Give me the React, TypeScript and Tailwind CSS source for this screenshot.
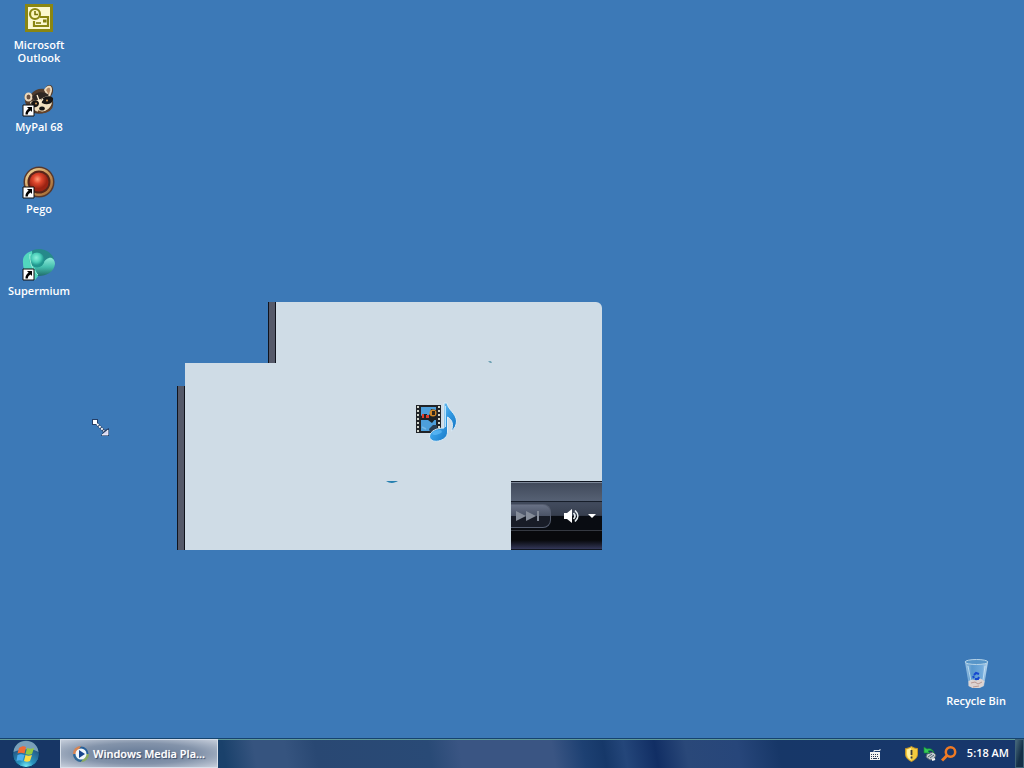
import type { ReactNode } from "react";

function ShortcutArrow() {
  return (
    <g>
      <path d="M0 20h11v11H0z" fill="#fff" stroke="#111" strokeWidth="1" />
      <path d="M4 22h5v5L7.600 25.600C6 26.500 5 27.500 4.800 29.500H2.500C2.300 27 3.500 25 5.600 23.700z" fill="#000" />
    </g>
  );
}

function OutlookIcon() {
  return (
    <svg viewBox="0 0 32 32" className="size-8" aria-hidden="true">
      <path d="M2 1h28v28H2z" fill="#8a8612" />
      <path d="M5 4h22v22H5z" fill="#fbf8cf" />
      <circle cx="12" cy="11" r="5" fill="#fdf7bf" stroke="#8a8612" strokeWidth="2.200" />
      <path d="M12 8v3.500H15" fill="none" stroke="#77730b" strokeWidth="1.600" />
      <path d="M17 14h8v9H11v-5" fill="none" stroke="#8a8612" strokeWidth="2.200" />
      <path d="M20 16.500h3.500v3H20z" fill="#817d10" />
      <path d="M13 20h5" stroke="#817d10" strokeWidth="1.600" />
    </svg>
  );
}

function RaccoonIcon() {
  return (
    <svg viewBox="0 0 32 32" className="size-8 overflow-visible" aria-hidden="true">
      <path d="M2 13C0 9 4 7 8 9c4-5 9-6 14-5 1-4 5-5 7-3 2 4 1 8-1 10 3 5 3 10 0 13-5 4-11 6-17 4-5-3-10-9-9-15z" fill="#513c2e" />
      <ellipse cx="5.500" cy="12" rx="3" ry="3.500" fill="#6b5140" stroke="#ecd9bc" strokeWidth="2" />
      <path d="M22 5c3-5 7-4 6 1l-2 6z" fill="#b08561" stroke="#ecd9bc" strokeWidth="1.800" />
      <path d="M9 12c4-6 12-6 17-2l-5 4-8 3z" fill="#2e2723" />
      <path d="M7 17c5-2 8-2 11-3 4-3 8-4 11-1 1 6-2 11-7 13-6 3-13 0-15-9z" fill="#f0dfbf" />
      <path d="M8 18c3-4 7-3 8 0 0 4-4 5-7 4zm10-3c3-4 9-5 12-2 1 5-5 8-11 5z" fill="#181615" />
      <path d="M14 10l3 8 3-4" stroke="#fff0d4" strokeWidth="1.300" fill="none" />
      <ellipse cx="19" cy="23.500" rx="2.800" ry="2" fill="#151515" />
      <path d="M15 26c5 3 11 1 14-4" fill="none" stroke="#684326" strokeWidth="1.500" />
      <circle cx="13" cy="18.500" r="1" fill="#d29858" /><circle cx="24" cy="15.500" r="1" fill="#d29858" />
      <ShortcutArrow />
    </svg>
  );
}

function PegoIcon() {
  return (
    <svg viewBox="0 0 32 32" className="size-8 overflow-visible" aria-hidden="true">
      <defs>
        <radialGradient id="pego" cx=".42" cy=".35"><stop stopColor="#ff9c78" /><stop offset=".45" stopColor="#df472d" /><stop offset="1" stopColor="#9b2313" /></radialGradient>
        <linearGradient id="ring" x1="0" y1="0" x2="1" y2="1"><stop stopColor="#f3dda0" /><stop offset=".5" stopColor="#c99558" /><stop offset="1" stopColor="#9c622d" /></linearGradient>
      </defs>
      <circle cx="16" cy="15" r="15.500" fill="#57382d" />
      <circle cx="16" cy="15" r="14" fill="url(#ring)" />
      <circle cx="16" cy="15" r="11.500" fill="#57251a" />
      <circle cx="16" cy="15" r="9.500" fill="url(#pego)" />
      <ShortcutArrow />
    </svg>
  );
}

function SupermiumIcon() {
  return (
    <svg viewBox="0 0 32 32" className="size-8 overflow-visible" aria-hidden="true">
      <defs>
        <radialGradient id="super" cx=".45" cy=".35"><stop stopColor="#8af0dc" /><stop offset=".6" stopColor="#4bceb9" /><stop offset="1" stopColor="#21968e" /></radialGradient>
        <linearGradient id="superRight" x1="0" y1="0" x2="0" y2="1"><stop stopColor="#8eebd9" /><stop offset=".5" stopColor="#45bfae" /><stop offset="1" stopColor="#206d6a" /></linearGradient>
      </defs>
      <path d="M6 4C12-3 27-1 31 10l-11 3L8 8z" fill="#26898a" />
      <path d="M0 14C-1 7 4 3 9 2l1 11c1 5 4 9 6 13l-4 5C4 28 0 22 0 14z" fill="#52d6be" />
      <path d="M11 17c7 3 9-6 15-8 3-1 6 2 6 6-1 8-8 12-17 12z" fill="url(#superRight)" />
      <circle cx="14" cy="11" r="7.500" fill="url(#super)" />
      <path d="M7 5c-1 7 2 15 8 21" stroke="#a2f2dd" fill="none" />
      <ShortcutArrow />
    </svg>
  );
}

function RecycleIcon() {
  return (
    <svg viewBox="0 0 32 32" className="size-8" aria-hidden="true">
      <defs><linearGradient id="bin"><stop stopColor="#a9cde8" /><stop offset=".3" stopColor="#5b9bd0" /><stop offset=".75" stopColor="#78b0df" /><stop offset="1" stopColor="#d2e6f5" /></linearGradient></defs>
      <path d="M5 4h23l-4 24-4 2h-7l-4-2z" fill="url(#bin)" opacity=".9" />
      <path d="M8.500 23l4-1.500 4 1 4-2 4 2.500-1 5-4 2h-7l-4-2z" fill="#dcd3d1" />
      <path d="M11 25l4-1 3 2 4-2M13 29l6-1" fill="none" stroke="#b89993" />
      <ellipse cx="16.500" cy="4" rx="11.500" ry="2.500" fill="#5795c8" stroke="#b7d4e8" />
      <path d="M14 17l2-2 3 1m0 3l-1 2h-3m-1-1l-1-2" fill="none" stroke="#1648d0" strokeWidth="2" />
      <path d="M8 8l3 15M25 8l-2 14" stroke="#e4f7ff" opacity=".6" />
    </svg>
  );
}

function DesktopIcon({ label, children, small = false }: { label: ReactNode; children: ReactNode; small?: boolean }) {
  return (
    <button className={small ? "flex w-20 flex-col items-center gap-1 text-center leading-[13px]" : "flex h-[82px] w-[78px] flex-col items-center gap-[3px] text-center leading-[13px]"}>
      {children}
      <span>{label}</span>
    </button>
  );
}

function MediaIcon() {
  return (
    <svg viewBox="0 0 42 42" className="absolute top-[100px] left-[239px] size-[42px]" aria-hidden="true">
      <defs>
        <linearGradient id="note" x1="0" y1="0" x2="1" y2="1"><stop stopColor="#a0ddff" /><stop offset=".5" stopColor="#349ce4" /><stop offset="1" stopColor="#0965b7" /></linearGradient>
      </defs>
      <path d="M0 3h25v28H0z" fill="#202327" />
      <path d="M2 4v26M23 4v26" stroke="#d3d7cd" strokeWidth="2" strokeDasharray="2 2" />
      <path d="M5 5h15v11H5zm0 13h15v11H5z" fill="#4d9fdb" />
      <path d="M5 17v-3l3-2h3v3l3-3 1-5 5 1v8l-4 5-4-3H5z" fill="#1b2226" />
      <path d="M6 12h2v4H6zm4 1h3v3h-3z" fill="#df3c29" /><circle cx="17" cy="11" r="3.500" fill="#cf8627" /><path d="M16 9h3v4h-3z" fill="#30291f" />
      <path d="M13 27l4-4h4v7h-7z" fill="#293f54" />
      <path d="M6 25l4 2" fill="none" stroke="#75b9e7" strokeWidth="1.500" />
      <path d="M28 1h3c1 7 9 10 9.500 18 0 4-2 8-5 10 2-7 1-11-4-14v15c0 5-4 8-9 9-5 1-9-1-9-5 1-5 7-8 14.500-8z" fill="url(#note)" stroke="#dcecf6" strokeWidth="1" />
      <path d="M29.500 4v21" stroke="#b7e4ff" strokeWidth="1" />
      <ellipse cx="21" cy="30.500" rx="5" ry="2" fill="#71c7ff" opacity=".5" transform="rotate(-15 21 30.500)" />
    </svg>
  );
}

function VolumeIcon() {
  return (
    <svg viewBox="0 0 16 16" className="size-4" aria-hidden="true">
      <path d="M1 5h3l5-4v14l-5-4H1z" fill="#fff" />
      <path d="M10.500 5c2 2 2 4 0 6M12 2.500c4 4 4 7 0 11" fill="none" stroke="#e6edf0" strokeWidth="1.700" />
    </svg>
  );
}

function PlayerWindow() {
  return (
    <section aria-label="Windows Media Player" className="absolute top-[302px] left-[177px] flex w-[425px] flex-col">
      <div className="ml-[91px] flex h-[61px]">
        <div className="w-2 border-x border-[#10131c] bg-[#555969]" />
        <div className="flex-1 rounded-tr-md bg-[#cfdce6]" />
      </div>
      <div className="flex h-[187px]">
        <div className="mt-[23px] w-2 border-x border-[#10131c] bg-[#555969]" />
        <div className="flex flex-1 items-end justify-end bg-[#cfdce6]">
          <div className="w-[91px] border-y border-[#111722] bg-black">
            <div className="h-[19px] border-t border-[#7d8798] bg-linear-to-b from-[#414a5b] to-[#566174]" />
            <div className="flex h-[30px] items-center border-y border-t-[#171e2a] border-b-[#353941] bg-linear-to-b from-[#40495b] from-10% via-[#363e4e] via-48% to-[#090c12] to-50%">
              <button aria-label="Next" className="flex h-6 w-10 items-center rounded-r-lg border border-l-0 border-[#565e70] bg-linear-to-b from-[#687185] from-0% via-[#4c5467] via-48% to-[#181c27] to-50%">
                <svg viewBox="0 0 25 12" className="ml-1 h-3 w-[25px]" aria-hidden="true"><path d="M1 1l10 5-10 5zm10 0l10 5-10 5zm11 0h2v10h-2z" fill="#858c99" /></svg>
              </button>
              <button aria-label="Volume" className="ml-3"><VolumeIcon /></button>
              <button aria-label="More options" className="ml-[9px]"><svg viewBox="0 0 8 5" className="h-[5px] w-2" aria-hidden="true"><path d="M0 0h8L4 4z" fill="#fff" /></svg></button>
            </div>
            <div className="h-[18px] bg-linear-to-b from-[#08090c] from-50% to-[#34385a]" />
          </div>
        </div>
      </div>
      <MediaIcon />
      <svg viewBox="0 0 12 3" className="absolute top-[178px] left-[209px] h-[3px] w-3" aria-hidden="true"><path d="M0 1h12c-3 2-8 3-12 0" fill="#267faf" /></svg>
      <svg viewBox="0 0 4 3" className="absolute top-[59px] left-[311px] h-[3px] w-1" aria-hidden="true"><path d="M0 0l3 0 1 2H2z" fill="#72a3b5" /></svg>
    </section>
  );
}

function StartIcon() {
  return (
    <svg viewBox="0 0 28 28" className="size-7" aria-hidden="true">
      <defs><radialGradient id="start" cx=".5" cy=".98" r=".7"><stop stopColor="#7df3fb" /><stop offset=".4" stopColor="#2a95be" /><stop offset="1" stopColor="#245b89" /></radialGradient></defs>
      <circle cx="14" cy="14" r="13.500" fill="url(#start)" stroke="#0b3663" />
      <path d="M1.500 12C3-3 25-3 26.500 12c-7-4-17-3-25 0z" fill="#a9c4d2" opacity=".65" />
      <path d="M7 8c3-2 5-2 7-1l-1.500 6.500c-3-1-5-1-7 0z" fill="#f06a35" />
      <path d="M15 8c3 1 4 1 7 0l-2 6c-2 1-4 1-6.500 0z" fill="#94c941" />
      <path d="M5.500 15c3-1 4-1 7 0l-2 6c-2-1-4-1-6 0z" fill="#4faff0" />
      <path d="M13.500 15c2 1 4 1 6.500 0l-2 6c-2 1-4 1-6 0z" fill="#ffdc42" />
    </svg>
  );
}

function TaskIcon() {
  return (
    <svg viewBox="0 0 16 16" className="size-4 shrink-0" aria-hidden="true">
      <circle cx="8" cy="8" r="7.500" fill="#285f98" /><path d="M8 0a8 8 0 0 0-8 8h3z" fill="#d88553" /><path d="M0 8a8 8 0 0 0 8 8v-3z" fill="#2f6796" /><path d="M8 16a8 8 0 0 0 8-8h-3z" fill="#8bab60" />
      <circle cx="8" cy="8" r="5.500" fill="#f1f7fb" /><path d="M6 4l6 4-6 4z" fill="#17448c" />
    </svg>
  );
}

function TrayIcons() {
  return (
    <div className="flex items-center">
      <button aria-label="Keyboard"><svg viewBox="0 0 12 12" className="size-3" aria-hidden="true"><path d="M1 4h10v8H1z" fill="#f2f3f2" /><path d="M5 4V2.500h6V1" fill="none" stroke="#dfe6ec" /><path d="M2 6.500h8M2 8.500h8" stroke="#29354e" strokeDasharray="1 1" /><path d="M2 10.500h1m1 0h4m1 0h1" stroke="#29354e" /></svg></button>
      <button aria-label="Security alert" className="ml-6"><svg viewBox="0 0 13 16" className="h-4 w-[13px]" aria-hidden="true"><path d="M6.500.5C4 2 2 2.500.5 2.500v5.500c0 4 3 6 6 7.500 3-1.500 6-3.500 6-7.500V2.500c-2 0-4-.5-6-2z" fill="#f2ca3f" stroke="#c39529" /><path d="M6 2C4 3 3 3 2 3.500V8c0 3 2 5 4 6z" fill="#fff09a" /><path d="M6.500 4v5M6.500 10.500v2" stroke="#3b3a38" strokeWidth="1.800" /></svg></button>
      <button aria-label="Safely remove hardware" className="ml-[5px]"><svg viewBox="0 0 14 16" className="h-4 w-3.5" aria-hidden="true"><path d="M4 8l6-2 3 3-2 4-4 1-4-3z" fill="#c2cbd0" stroke="#58646d" /><path d="M5 11l4-3M7 12l4-3" stroke="#526572" /><path d="M1 1v6h6L5 5c3-1 4-1 6 2-1-4-4-5-7-4z" fill="#35ca56" stroke="#12873b" strokeWidth=".7" /><path d="M9 14l3-1" stroke="#f2f5f5" strokeWidth="2" /></svg></button>
      <button aria-label="Search" className="ml-1"><svg viewBox="0 0 16 16" className="size-4" aria-hidden="true"><circle cx="9.500" cy="6" r="4.700" fill="none" stroke="#f07a24" strokeWidth="2.500" /><path d="M6.500 9L1 14.500" stroke="#f07a24" strokeWidth="3" /></svg></button>
    </div>
  );
}

export default function App() {
  return (
    <div className="relative flex min-h-screen flex-col overflow-hidden bg-[#3c79b7] font-['Open_Sans','Noto_Sans',sans-serif] text-[11px] font-semibold text-white">
      <main className="flex flex-1 items-start justify-between">
        <nav aria-label="Desktop" className="flex flex-col pt-[3px] [text-shadow:0_0_1px_#ffffff80,1px_1px_1px_#285781]">
          <DesktopIcon label={<>Microsoft<br />Outlook</>}><OutlookIcon /></DesktopIcon>
          <DesktopIcon label="MyPal 68"><RaccoonIcon /></DesktopIcon>
          <DesktopIcon label="Pego"><PegoIcon /></DesktopIcon>
          <DesktopIcon label="Supermium"><SupermiumIcon /></DesktopIcon>
        </nav>
        <div className="mr-2 mb-[31px] self-end [text-shadow:0_0_1px_#ffffff80,1px_1px_1px_#285781]"><DesktopIcon small label="Recycle Bin"><RecycleIcon /></DesktopIcon></div>
      </main>
      <PlayerWindow />
      <svg viewBox="0 0 18 18" className="absolute top-[418px] left-[91px] size-[18px]" aria-hidden="true"><path d="M1 1h6v4l7 7 4-2v8h-8l2-4-7-7H1z" fill="#253e66" /><path d="M2 2h4v4H2z" fill="#fff" /><path d="M6 6l7 7" stroke="#fff" strokeWidth="2" strokeDasharray="2 1" /><path d="M11 17l6-5v5z" fill="#d6d5f2" stroke="#fff" strokeWidth=".7" /></svg>
      <footer className="flex h-[30px] items-stretch border-t border-[#16436d] bg-[linear-gradient(80deg,#173961_0%,#1a416b_22%,#36547f_25%,#36547f_28%,#294873_31%,#294a76_42%,#3a5583_45%,#3a5583_54%,#1d4072_57%,#163869_59%,#24467a_61%,#112e64_64%,#2a4879_67%,#27467a_72%,#173768_76%,#17376c_100%)] [box-shadow:inset_0_1px_#609997]">
        <button aria-label="Start" className="flex w-[60px] items-center justify-start bg-[#173665] pl-3 [box-shadow:inset_0_1px_#609997]"><StartIcon /></button>
        <button className="flex w-[158px] items-center gap-1 border border-[#d7dfe9] bg-[radial-gradient(ellipse_at_center,#657a97_0%,#8393aa_55%,#c6cedb_100%)] pl-3 [text-shadow:0_0_1px_#ffffff80,1px_1px_1px_#31435e]"><TaskIcon /><span className="whitespace-nowrap pt-0.5">Windows Media Pla...</span></button>
        <div className="ml-auto flex items-center">
          <TrayIcons />
          <time className="ml-2.5 whitespace-nowrap">5:18 AM</time>
          <button aria-label="Show desktop" className="ml-1.5 h-full w-[9px] border border-[#3f6276] bg-linear-to-br from-[#47697c] to-[#142f47] to-60%" />
        </div>
      </footer>
    </div>
  );
}
